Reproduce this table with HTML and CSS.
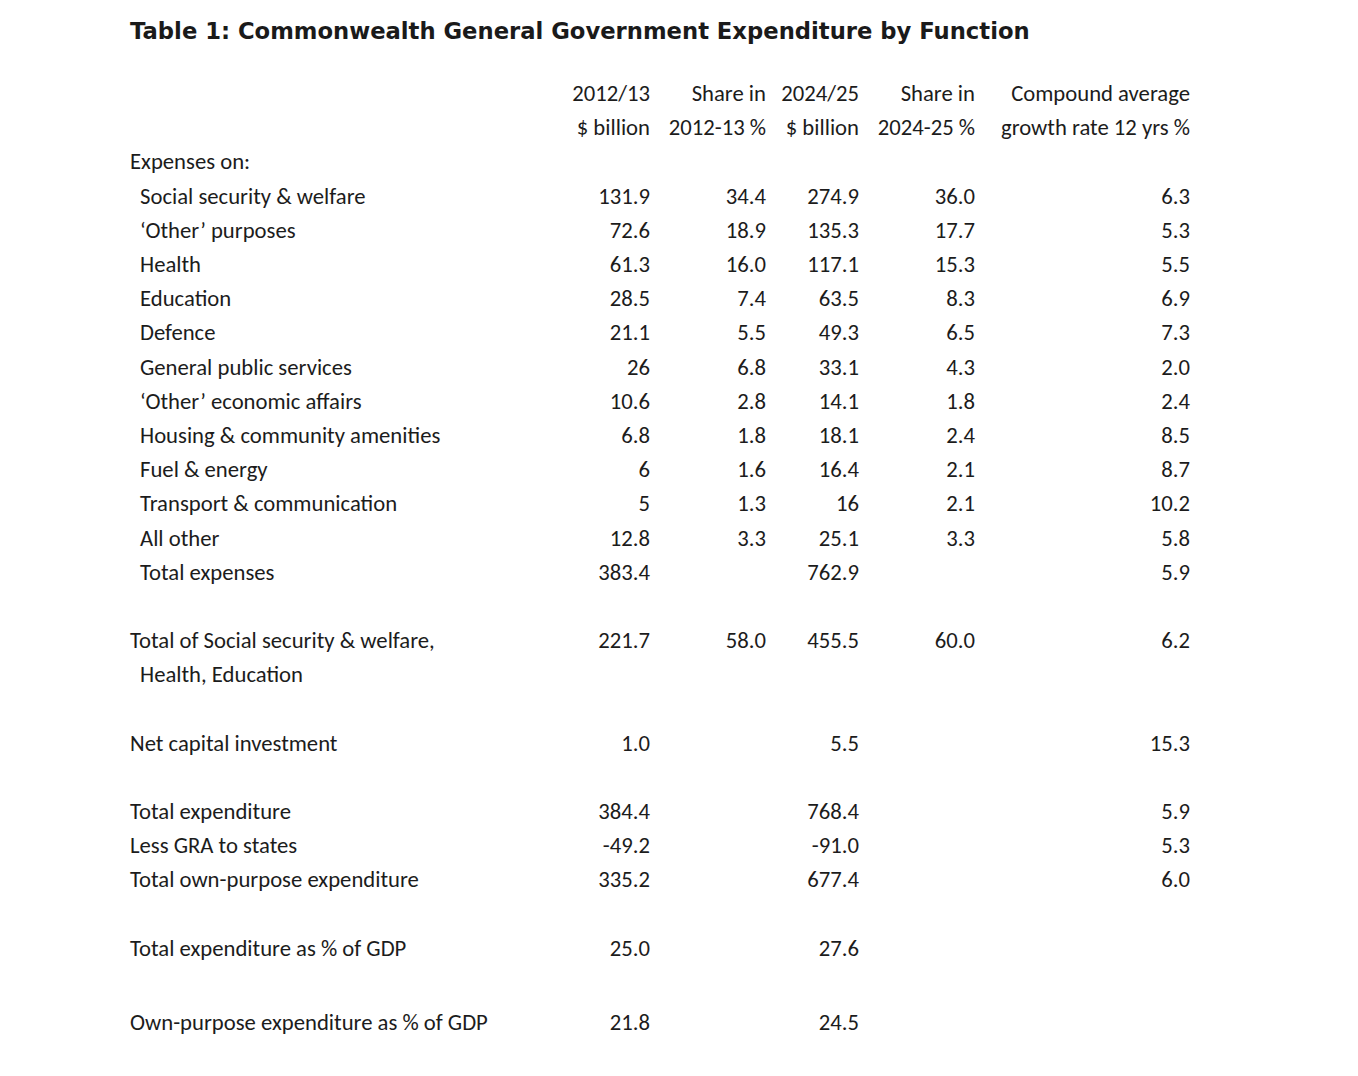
FILE: index.html
```html
<!DOCTYPE html>
<html>
<head>
<meta charset="utf-8">
<link rel="stylesheet" href="styles.css">
</head>
<body>
<div class="page">
  <h1 class="title">Table 1: Commonwealth General Government Expenditure by Function</h1>
  <div class="table">
    <div class="row"><span></span><span class="num">2012/13</span><span class="num">Share in</span><span class="num">2024/25</span><span class="num">Share in</span><span class="num">Compound average</span></div>
    <div class="row"><span></span><span class="num">$ billion</span><span class="num">2012-13 %</span><span class="num">$ billion</span><span class="num">2024-25 %</span><span class="num">growth rate 12 yrs %</span></div>
    <div class="row"><span class="label">Expenses on:</span></div>
    <div class="row"><span class="label ind">Social security &amp; welfare</span><span class="num">131.9</span><span class="num">34.4</span><span class="num">274.9</span><span class="num">36.0</span><span class="num">6.3</span></div>
    <div class="row"><span class="label ind">‘Other’ purposes</span><span class="num">72.6</span><span class="num">18.9</span><span class="num">135.3</span><span class="num">17.7</span><span class="num">5.3</span></div>
    <div class="row"><span class="label ind">Health</span><span class="num">61.3</span><span class="num">16.0</span><span class="num">117.1</span><span class="num">15.3</span><span class="num">5.5</span></div>
    <div class="row"><span class="label ind">Education</span><span class="num">28.5</span><span class="num">7.4</span><span class="num">63.5</span><span class="num">8.3</span><span class="num">6.9</span></div>
    <div class="row"><span class="label ind">Defence</span><span class="num">21.1</span><span class="num">5.5</span><span class="num">49.3</span><span class="num">6.5</span><span class="num">7.3</span></div>
    <div class="row"><span class="label ind">General public services</span><span class="num">26</span><span class="num">6.8</span><span class="num">33.1</span><span class="num">4.3</span><span class="num">2.0</span></div>
    <div class="row"><span class="label ind">‘Other’ economic affairs</span><span class="num">10.6</span><span class="num">2.8</span><span class="num">14.1</span><span class="num">1.8</span><span class="num">2.4</span></div>
    <div class="row"><span class="label ind">Housing &amp; community amenities</span><span class="num">6.8</span><span class="num">1.8</span><span class="num">18.1</span><span class="num">2.4</span><span class="num">8.5</span></div>
    <div class="row"><span class="label ind">Fuel &amp; energy</span><span class="num">6</span><span class="num">1.6</span><span class="num">16.4</span><span class="num">2.1</span><span class="num">8.7</span></div>
    <div class="row"><span class="label ind">Transport &amp; communication</span><span class="num">5</span><span class="num">1.3</span><span class="num">16</span><span class="num">2.1</span><span class="num">10.2</span></div>
    <div class="row"><span class="label ind">All other</span><span class="num">12.8</span><span class="num">3.3</span><span class="num">25.1</span><span class="num">3.3</span><span class="num">5.8</span></div>
    <div class="row"><span class="label ind">Total expenses</span><span class="num">383.4</span><span class="num"></span><span class="num">762.9</span><span class="num"></span><span class="num">5.9</span></div>
    <div class="row"></div>
    <div class="row"><span class="label">Total of Social security &amp; welfare,</span><span class="num">221.7</span><span class="num">58.0</span><span class="num">455.5</span><span class="num">60.0</span><span class="num">6.2</span></div>
    <div class="row"><span class="label ind">Health, Education</span></div>
    <div class="row"></div>
    <div class="row"><span class="label">Net capital investment</span><span class="num">1.0</span><span class="num"></span><span class="num">5.5</span><span class="num"></span><span class="num">15.3</span></div>
    <div class="row"></div>
    <div class="row"><span class="label">Total expenditure</span><span class="num">384.4</span><span class="num"></span><span class="num">768.4</span><span class="num"></span><span class="num">5.9</span></div>
    <div class="row"><span class="label">Less GRA to states</span><span class="num">-49.2</span><span class="num"></span><span class="num">-91.0</span><span class="num"></span><span class="num">5.3</span></div>
    <div class="row"><span class="label">Total own-purpose expenditure</span><span class="num">335.2</span><span class="num"></span><span class="num">677.4</span><span class="num"></span><span class="num">6.0</span></div>
    <div class="row"></div>
    <div class="row"><span class="label">Total expenditure as % of GDP</span><span class="num">25.0</span><span class="num"></span><span class="num">27.6</span></div>
    <div class="row"></div>
    <div class="row last"><span class="label">Own-purpose expenditure as % of GDP</span><span class="num">21.8</span><span class="num"></span><span class="num">24.5</span></div>
  </div>
</div>
</body>
</html>
```
FILE: styles.css
```css
html, body {
  margin: 0;
  padding: 0;
  background: #ffffff;
}
.page {
  padding: 0 0 0 130px;
  color: #1c1c1c;
}
.title {
  margin: 0;
  height: 76px;
  padding-top: 17px;
  box-sizing: border-box;
  font-family: "DejaVu Sans", Verdana, sans-serif;
  font-weight: bold;
  font-size: 22.7px;
  line-height: 28px;
  color: #1a1a1a;
}
.table {
  font-family: Carlito, Calibri, Lato, sans-serif;
  font-size: 22.7px;
}
.row {
  display: grid;
  grid-template-columns: 440px 80px 116px 93px 116px 215px;
  height: 34.2px;
  align-items: center;
  line-height: 26px;
  white-space: nowrap;
}
.row.last {
  margin-top: 6px;
}
.label {
  text-align: left;
}
.label.ind {
  padding-left: 10px;
}
.num {
  text-align: right;
}
```
